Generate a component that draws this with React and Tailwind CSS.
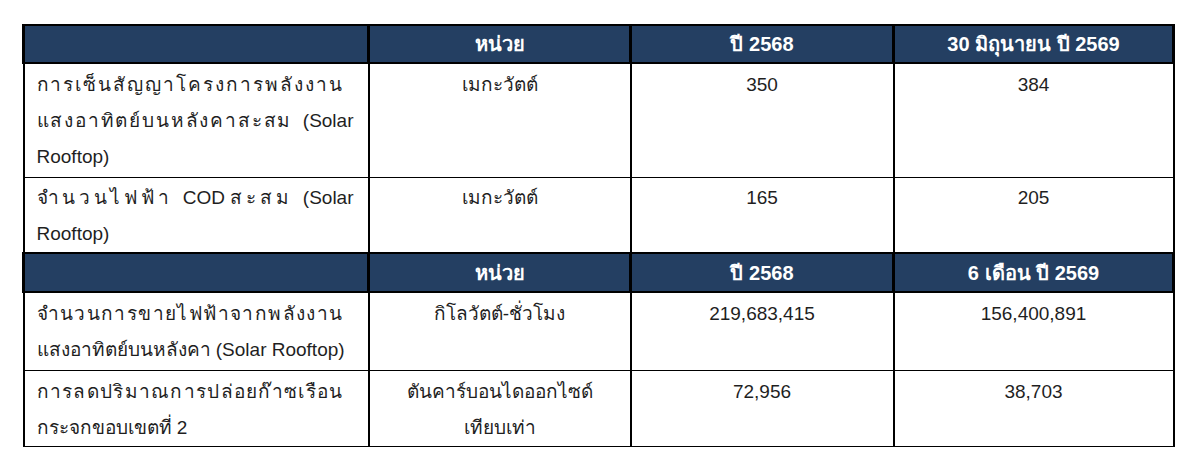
import React, { useRef, useLayoutEffect } from 'react'

// stretch the Thai parts of a line so the line fills a fixed width
// (Word-style distributed justify; latin words keep normal spacing)
function Spread({ parts, width }) {
  const ref = useRef(null)

  useLayoutEffect(() => {
    const fit = () => {
      const el = ref.current
      if (!el) return
      el.style.setProperty('--ls', '0px')
      const w0 = el.getBoundingClientRect().width
      el.style.setProperty('--ls', '1px')
      const w1 = el.getBoundingClientRect().width
      const step = w1 - w0
      el.style.setProperty('--ls', step > 0 ? `${(width - w0) / step}px` : '0px')
    }
    fit()
    if (document.fonts) document.fonts.ready.then(fit)
  }, [parts, width])

  return (
    <span className="block h-[36px] whitespace-nowrap">
      <span ref={ref} className="inline-block">
        {parts.map((p, i) =>
          p.thai ? (
            <span key={i} className="tracking-[var(--ls)]">{p.t}</span>
          ) : (
            <span key={i} className="whitespace-pre">{p.t}</span>
          )
        )}
      </span>
    </span>
  )
}

const th = (t) => ({ t, thai: true })
const en = (t) => ({ t, thai: false })

const Line = ({ children }) => <span className="block h-[36px] whitespace-nowrap">{children}</span>

const headTd = 'bg-[#243f62] text-white text-[20px] font-bold text-center border-x-[3px] border-y-2 border-black'

function HeaderRow({ last, h }) {
  return (
    <tr className={h}>
      <td className={headTd}></td>
      <td className={headTd}>หน่วย</td>
      <td className={headTd}>ปี 2568</td>
      <td className={headTd}>{last}</td>
    </tr>
  )
}

function DataRow({ label, unit, a, b, pad }) {
  const td = 'align-top border-x-2 border-y border-black ' + pad
  return (
    <tr>
      <td className={td + ' pl-[12px]'}>{label}</td>
      <td className={td + ' text-center'}>{unit}</td>
      <td className={td + ' text-center'}>{a}</td>
      <td className={td + ' text-center'}>{b}</td>
    </tr>
  )
}

export default function App() {
  return (
    <div className="w-[1200px] h-[469px] bg-white pt-[24px] pl-[22px]">
      <table className="table-fixed border-collapse w-[1150px] text-[19px] leading-[36px] text-[#1f1f1f] font-['Liberation_Sans','Noto_Sans',sans-serif]">
        <colgroup>
          <col className="w-[345px]" />
          <col className="w-[262px]" />
          <col className="w-[263px]" />
          <col className="w-[280px]" />
        </colgroup>
        <tbody>
          <HeaderRow last="30 มิถุนายน ปี 2569" h="h-[38px]" />
          <DataRow
            pad="pt-[3px] pb-[2px]"
            label={
              <>
                <Spread parts={[th('การเซ็นสัญญาโครงการพลังงาน')]} width={307} />
                <Spread parts={[th('แสงอาทิตย์บนหลังคาสะสม'), en('  (Solar')]} width={317} />
                <Line>Rooftop)</Line>
              </>
            }
            unit={<Line>เมกะวัตต์</Line>}
            a={<Line>350</Line>}
            b={<Line>384</Line>}
          />
          <DataRow
            pad="pt-[2px]"
            label={
              <>
                <Spread parts={[th('จำนวนไฟฟ้า'), en('  COD '), th('สะสม'), en('  (Solar')]} width={317} />
                <Line>Rooftop)</Line>
              </>
            }
            unit={<Line>เมกะวัตต์</Line>}
            a={<Line>165</Line>}
            b={<Line>205</Line>}
          />
          <HeaderRow last="6 เดือน ปี 2569" h="h-[39px]" />
          <DataRow
            pad="pt-[3px] pb-[2px]"
            label={
              <>
                <Spread parts={[th('จำนวนการขายไฟฟ้าจากพลังงาน')]} width={307} />
                <Line>แสงอาทิตย์บนหลังคา (Solar Rooftop)</Line>
              </>
            }
            unit={<Line>กิโลวัตต์-ชั่วโมง</Line>}
            a={<Line>219,683,415</Line>}
            b={<Line>156,400,891</Line>}
          />
          <DataRow
            pad="pt-[3px]"
            label={
              <>
                <Spread parts={[th('การลดปริมาณการปล่อยก๊าซเรือน')]} width={307} />
                <Line>กระจกขอบเขตที่ 2</Line>
              </>
            }
            unit={
              <>
                <Line>ตันคาร์บอนไดออกไซด์</Line>
                <Line>เทียบเท่า</Line>
              </>
            }
            a={<Line>72,956</Line>}
            b={<Line>38,703</Line>}
          />
        </tbody>
      </table>
    </div>
  )
}
